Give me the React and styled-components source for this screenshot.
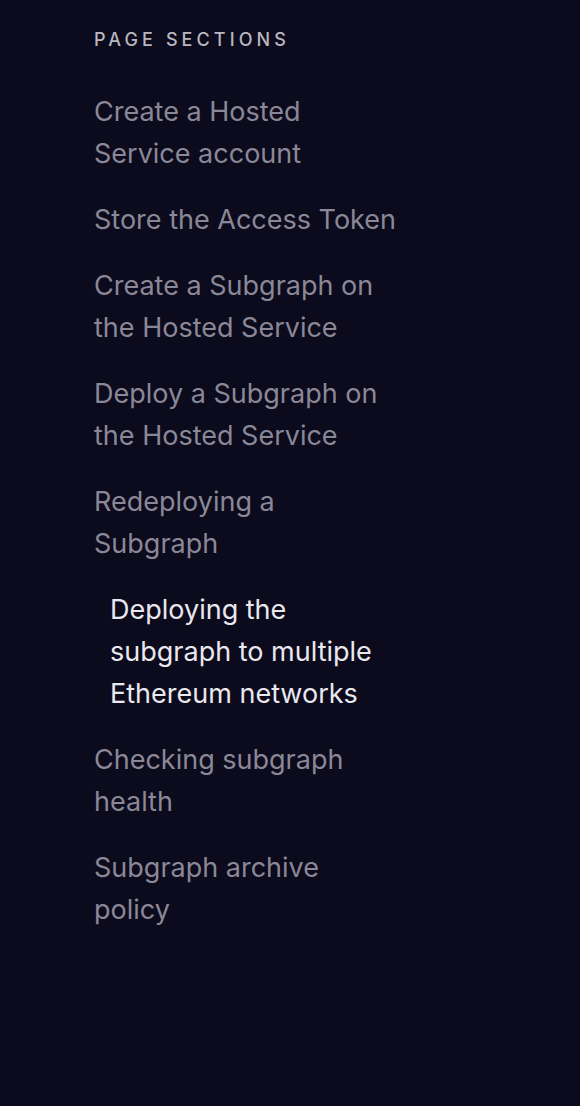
import React from 'react';
import styled, { createGlobalStyle } from 'styled-components';

const GlobalStyle = createGlobalStyle`
  html, body {
    margin: 0;
    padding: 0;
    background: #0c0a1d;
  }
  body {
    font-family: Inter, "Noto Sans", sans-serif;
    min-height: 1106px;
  }
`;

const Nav = styled.nav`
  padding: 28px 0 0 94px;
  width: 360px;
`;

const Heading = styled.h2`
  margin: 0;
  font-size: 18px;
  line-height: 24px;
  font-weight: 500;
  letter-spacing: 4.1px;
  text-transform: uppercase;
  color: #b8b7bf;
`;

const List = styled.ul`
  list-style: none;
  margin: 39px 0 0;
  padding: 0;
  display: flex;
  flex-direction: column;
  gap: 24px;
`;

const Item = styled.li`
  font-size: 27px;
  line-height: 42px;
  font-weight: 400;
  white-space: pre-line;
  padding-left: ${(p) => (p.$active ? '16px' : '0')};
  color: ${(p) => (p.$active ? '#e9e8ee' : '#8a8896')};
`;

const sections = [
  'Create a Hosted\nService account',
  'Store the Access Token',
  'Create a Subgraph on\nthe Hosted Service',
  'Deploy a Subgraph on\nthe Hosted Service',
  'Redeploying a\nSubgraph',
  'Deploying the\nsubgraph to multiple\nEthereum networks',
  'Checking subgraph\nhealth',
  'Subgraph archive\npolicy',
];

export default function App() {
  return (
    <>
      <GlobalStyle />
      <Nav>
        <Heading>Page Sections</Heading>
        <List>
          {sections.map((s, i) => (
            <Item key={s} $active={i === 5}>
              {s}
            </Item>
          ))}
        </List>
      </Nav>
    </>
  );
}
